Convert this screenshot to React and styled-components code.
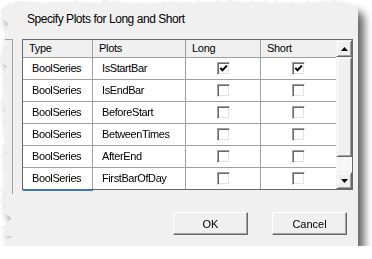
import React from 'react'
import styled, { createGlobalStyle } from 'styled-components'

const rows = [
  { type: 'BoolSeries', plot: 'IsStartBar', long: true, short: true },
  { type: 'BoolSeries', plot: 'IsEndBar', long: false, short: false },
  { type: 'BoolSeries', plot: 'BeforeStart', long: false, short: false },
  { type: 'BoolSeries', plot: 'BetweenTimes', long: false, short: false },
  { type: 'BoolSeries', plot: 'AfterEnd', long: false, short: false },
  { type: 'BoolSeries', plot: 'FirstBarOfDay', long: false, short: false },
]

// torn paper edge along the top and left side of the screenshot
const tornEdge = (w, h) => {
  let seed = 11
  const rnd = () => {
    seed = (seed * 9301 + 49297) % 233280
    return seed / 233280
  }
  const pts = []
  for (let x = 10; x < w - 6; x += 3) pts.push(`${x}px ${Math.round(rnd() * 5)}px`)
  pts.push(`${w - 3}px 6px`, `${w}px 10px`, `${w}px ${h}px`)
  for (let y = h; y > 10; y -= 3) {
    const amp = y > 195 ? 12 : 8
    pts.push(`${Math.round(rnd() * amp)}px ${y}px`)
  }
  pts.push('4px 6px')
  return `polygon(${pts.join(',')})`
}

const GlobalStyle = createGlobalStyle`
  body {
    margin: 0;
    background: #fff;
    font-family: "Liberation Sans", Arial, sans-serif;
  }
`

const Shadow = styled.div`
  width: 358px;
  height: 246px;
  filter: drop-shadow(6px 7px 4px rgba(0, 0, 0, 0.62));
`

const Dialog = styled.div`
  width: 100%;
  height: 100%;
  background: #f0f0f0;
  clip-path: ${p => p.$edge};
  display: flex;
  flex-direction: column;
`

const Title = styled.div`
  padding: 12px 0 0 27px;
  line-height: 14px;
  font-size: 12px;
  letter-spacing: -0.45px;
  color: #000;
`

const Body = styled.div`
  display: flex;
  margin-top: 13px;
  padding-left: 5px;
`

const Stub = styled.div`
  width: 7px;
  border-top: 1px solid #a0a0a0;
`

const Frame = styled.div`
  border-left: 1px solid #a0a0a0;
  padding-left: 9px;
  padding-bottom: 4px;
`

const GridBox = styled.div`
  display: flex;
  width: 329px;
  border: 1px solid #696969;
  background: #fff;
`

const Table = styled.div`
  display: grid;
  grid-template-columns: 70px 93px 75px 75px;
`

const HeadCell = styled.div`
  height: 17px;
  line-height: 17px;
  padding-left: 6px;
  background: #f0f0f0;
  border-bottom: 1px solid #a0a0a0;
  border-right: ${p => (p.$last ? 'none' : '1px solid #a0a0a0')};
  font-size: 11px;
  letter-spacing: -0.3px;
  color: #000;
`

const Cell = styled.div`
  height: 21px;
  line-height: 21px;
  display: flex;
  align-items: center;
  justify-content: ${p => (p.$center ? 'center' : 'flex-start')};
  padding-left: ${p => (p.$center ? '0' : '9px')};
  border-bottom: ${p => (p.$bottom ? 'none' : '1px solid #a0a0a0')};
  border-right: ${p => (p.$last ? 'none' : '1px solid #a0a0a0')};
  box-shadow: ${p => (p.$focus ? '0 2px 0 #3a78b8' : 'none')};
  font-size: 11px;
  letter-spacing: -0.4px;
  color: #000;
  white-space: nowrap;
`

const Box = styled.span`
  box-sizing: border-box;
  width: 13px;
  height: 13px;
  background: #fff;
  border: 1px solid;
  border-color: #a0a0a0 #fff #fff #a0a0a0;
  box-shadow: inset 1px 1px #696969, inset -1px -1px #e3e3e3;
  display: flex;
  align-items: center;
  justify-content: center;
`

const ScrollBar = styled.div`
  width: 16px;
  display: flex;
  flex-direction: column;
`

const ScrollBtn = styled.div`
  box-sizing: border-box;
  height: ${p => p.$h}px;
  background: #f0f0f0;
  border: 1px solid;
  border-color: #f0f0f0 #696969 #696969 #f0f0f0;
  box-shadow: inset 1px 1px #fff, inset -1px -1px #a0a0a0;
  display: flex;
  align-items: center;
  justify-content: center;
`

const Track = styled.div`
  flex: 1;
  background-color: #fff;
  background-image: repeating-conic-gradient(#f0f0f0 0 25%, #fff 0 50%);
  background-size: 2px 2px;
`

const Footer = styled.div`
  display: flex;
  justify-content: flex-end;
  gap: 24px;
  margin-top: 18px;
  padding-right: 11px;
`

const Button = styled.button`
  box-sizing: border-box;
  width: 75px;
  height: 23px;
  padding: 0;
  background: #f0f0f0;
  border: 1px solid;
  border-color: #fff #696969 #696969 #fff;
  box-shadow: inset -1px -1px #a0a0a0;
  font-family: "Liberation Sans", Arial, sans-serif;
  font-size: 11px;
  color: #000;
`

const Check = ({ on }) => (
  <Box>
    {on && (
      <svg width="9" height="9" viewBox="0 0 9 9">
        <path d="M1.3 3.8 L3.5 6.3 L7.9 1.6" fill="none" stroke="#000" strokeWidth="2" />
      </svg>
    )}
  </Box>
)

const Arrow = ({ down }) => (
  <svg width="7" height="4" viewBox="0 0 7 4">
    <path d={down ? 'M0 0 H7 L3.5 4 Z' : 'M0 4 H7 L3.5 0 Z'} fill="#000" />
  </svg>
)

export default function App() {
  return (
    <>
      <GlobalStyle />
      <Shadow>
        <Dialog $edge={tornEdge(358, 246)}>
          <Title>Specify Plots for Long and Short</Title>
          <Body>
            <Stub />
            <Frame>
              <GridBox>
                <Table>
                  <HeadCell>Type</HeadCell>
                  <HeadCell>Plots</HeadCell>
                  <HeadCell>Long</HeadCell>
                  <HeadCell $last>Short</HeadCell>
                  {rows.map((r, i) => {
                    const bottom = i === rows.length - 1
                    return (
                      <React.Fragment key={r.plot}>
                        <Cell $bottom={bottom} $focus={bottom}>{r.type}</Cell>
                        <Cell $bottom={bottom}>{r.plot}</Cell>
                        <Cell $bottom={bottom} $center><Check on={r.long} /></Cell>
                        <Cell $bottom={bottom} $center $last><Check on={r.short} /></Cell>
                      </React.Fragment>
                    )
                  })}
                </Table>
                <ScrollBar>
                  <ScrollBtn $h={17}><Arrow /></ScrollBtn>
                  <ScrollBtn $h={100} />
                  <Track />
                  <ScrollBtn $h={17}><Arrow down /></ScrollBtn>
                </ScrollBar>
              </GridBox>
            </Frame>
          </Body>
          <Footer>
            <Button>OK</Button>
            <Button>Cancel</Button>
          </Footer>
        </Dialog>
      </Shadow>
    </>
  )
}
